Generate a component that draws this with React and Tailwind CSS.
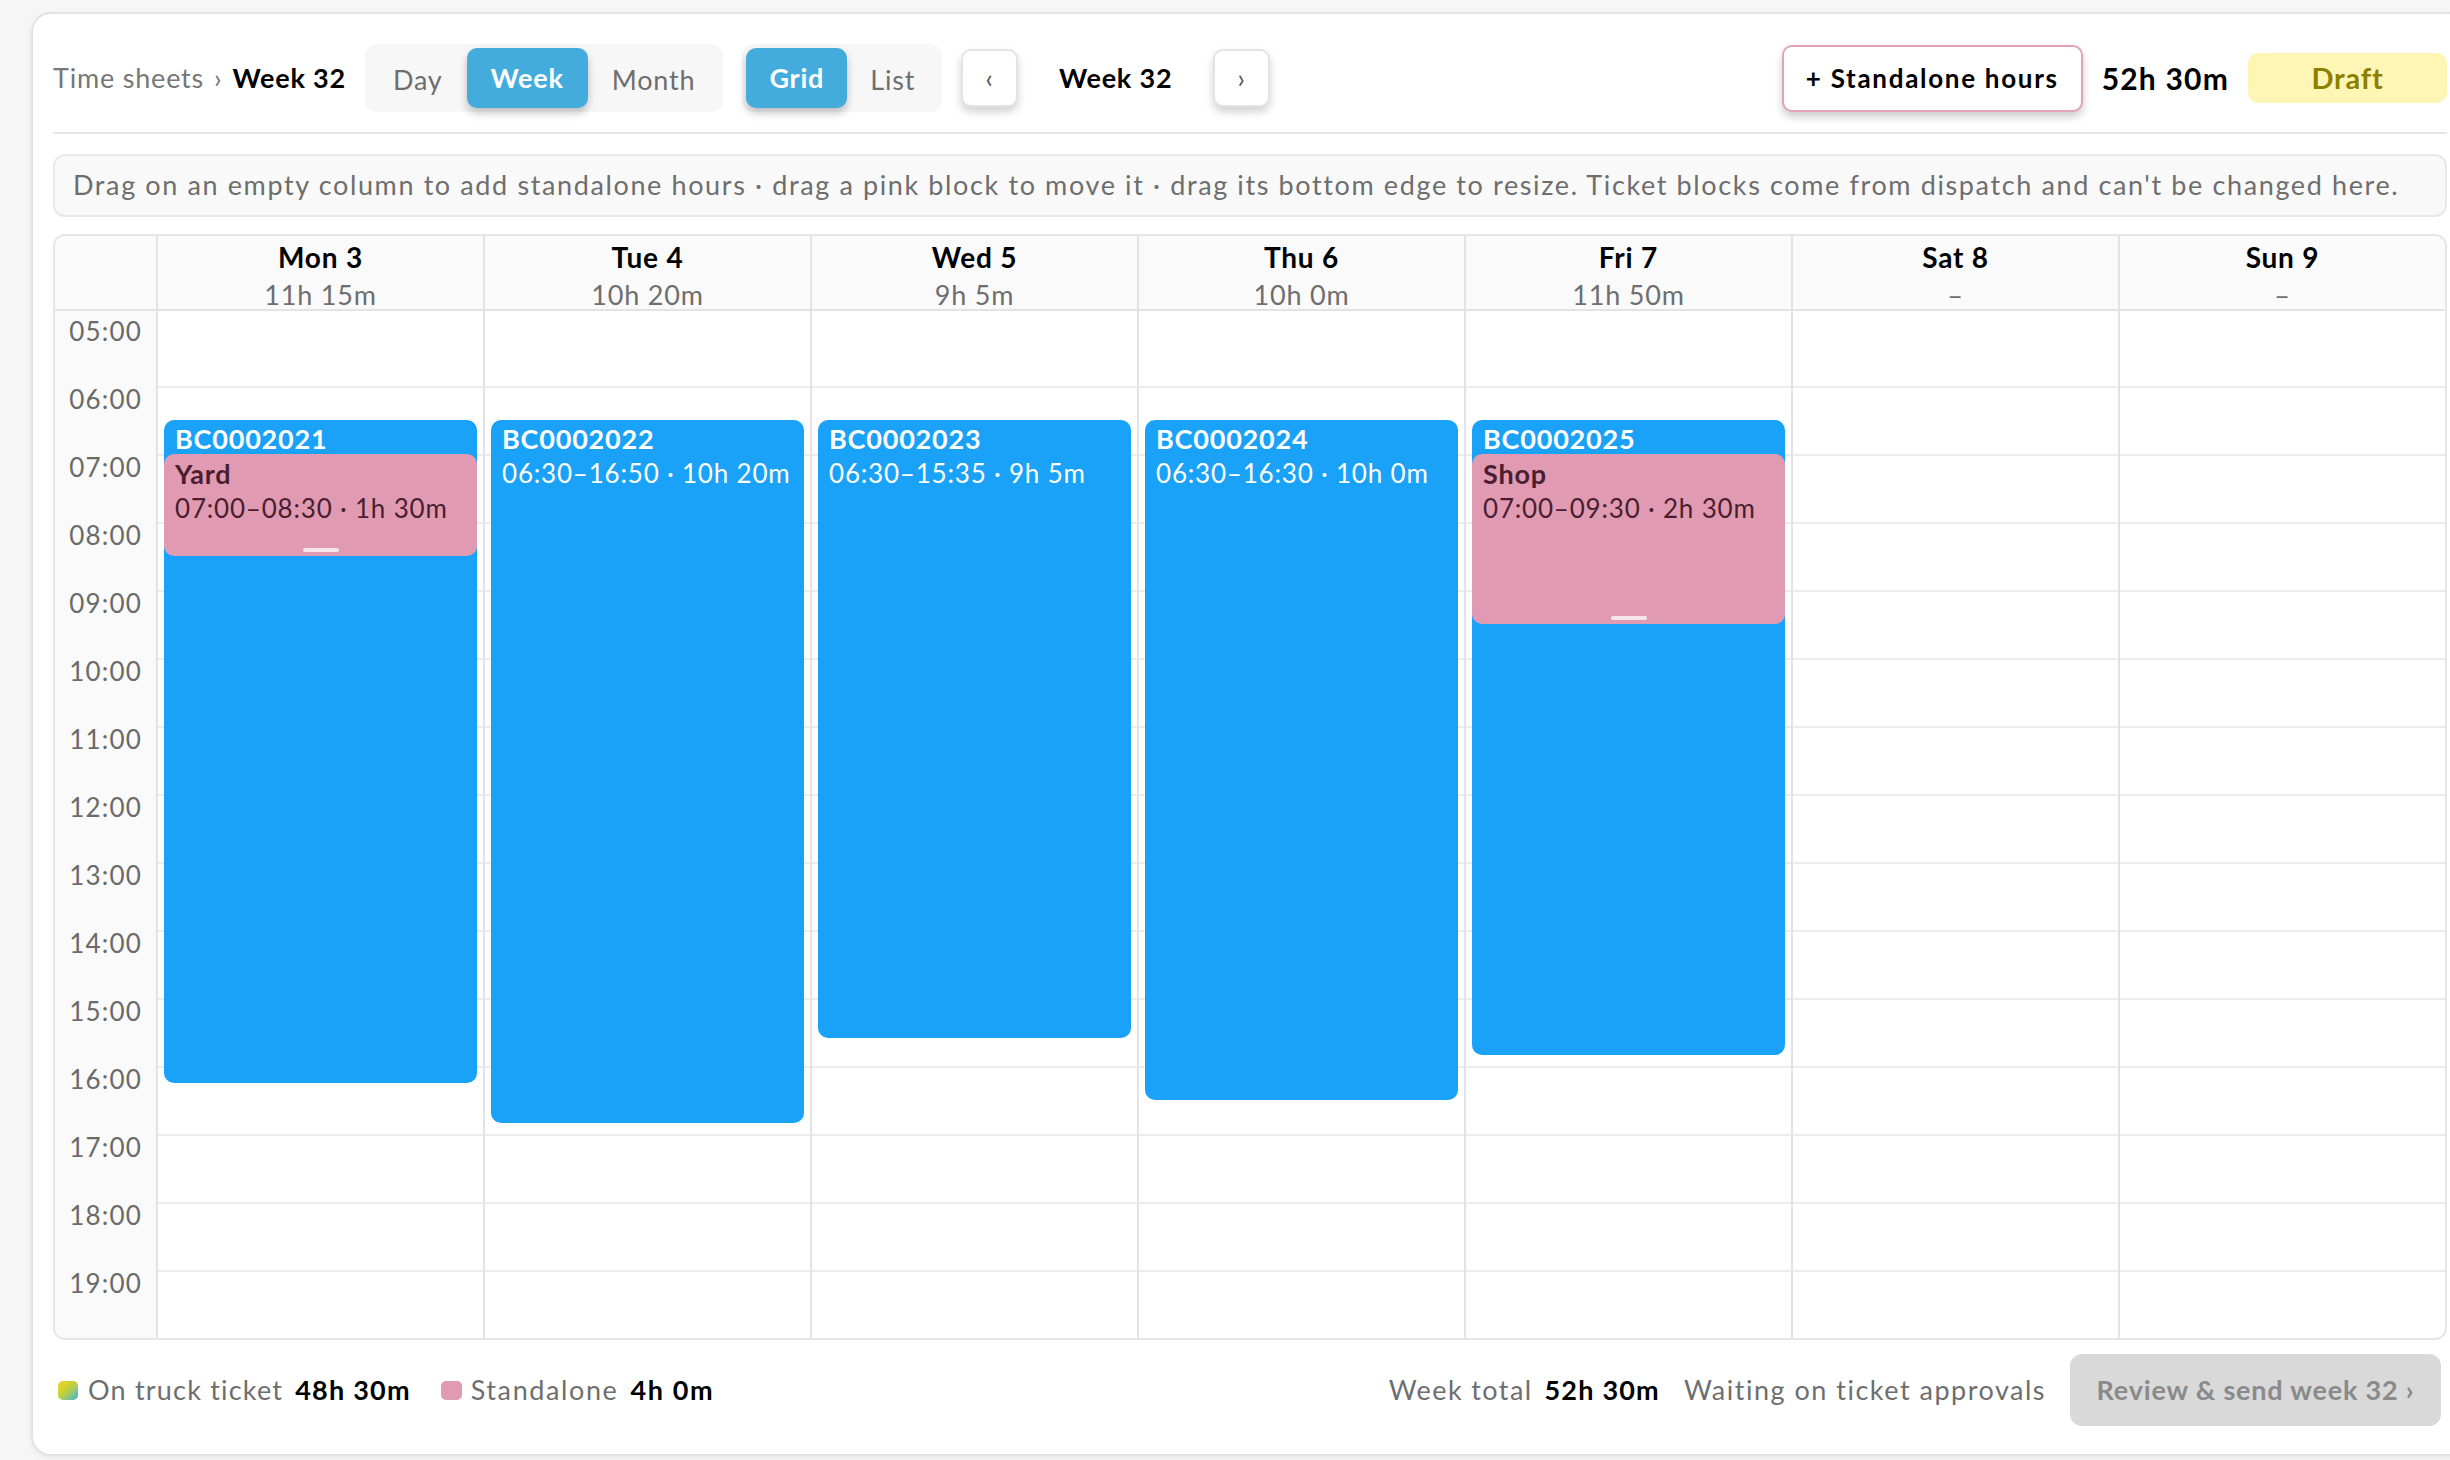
import React from "react";

const FONT = { fontFamily: "Lato, 'Noto Sans', sans-serif" };

const HOURS = ["05:00","06:00","07:00","08:00","09:00","10:00","11:00","12:00","13:00","14:00","15:00","16:00","17:00","18:00","19:00"];
const HOUR_H = 68;
const TOP_PAD = 7;

const DAYS = [
  { name: "Mon 3", total: "11h 15m", ticket: { id: "BC0002021", start: 6.5, end: 16.25 }, stand: { name: "Yard", start: 7, end: 8.5, label: "07:00–08:30 · 1h 30m" } },
  { name: "Tue 4", total: "10h 20m", ticket: { id: "BC0002022", start: 6.5, end: 16 + 50 / 60, label: "06:30–16:50 · 10h 20m" } },
  { name: "Wed 5", total: "9h 5m", ticket: { id: "BC0002023", start: 6.5, end: 15 + 35 / 60, label: "06:30–15:35 · 9h 5m" } },
  { name: "Thu 6", total: "10h 0m", ticket: { id: "BC0002024", start: 6.5, end: 16.5, label: "06:30–16:30 · 10h 0m" } },
  { name: "Fri 7", total: "11h 50m", ticket: { id: "BC0002025", start: 6.5, end: 15 + 50 / 60 }, stand: { name: "Shop", start: 7, end: 9.5, label: "07:00–09:30 · 2h 30m" } },
  { name: "Sat 8", total: "–" },
  { name: "Sun 9", total: "–" },
];

const pos = (s, e) => ({ top: TOP_PAD + (s - 5) * HOUR_H, height: (e - s) * HOUR_H });

function Segmented({ items, active, px }) {
  return (
    <div className="flex h-[68px] items-center rounded-[12px] bg-[#f7f7f7] p-[4px] tracking-[0.8px]">
      {items.map((it) => (
        <div
          key={it}
          className={
            (it === active
              ? "flex h-[60px] items-center rounded-[10px] bg-[#44acdd] text-[27px] font-bold text-white shadow-[0_5px_9px_rgba(0,0,0,0.24)] "
              : "flex h-[60px] items-center pt-[4px] text-[27px] text-[#6e6e6e] ") + px
          }
        >
          {it}
        </div>
      ))}
    </div>
  );
}

function NavBtn({ children }) {
  return (
    <div className="flex h-[58px] w-[57px] items-center justify-center rounded-[10px] border-2 border-[#e4e4e4] bg-white text-[26px] text-[#555] shadow-[0_5px_8px_rgba(0,0,0,0.18)]">
      {children}
    </div>
  );
}

export default function App() {
  return (
    <div className="h-[1460px] w-[2450px] overflow-hidden bg-[#f6f6f6] pl-[31px] pt-[12px] tracking-[1.2px]" style={FONT}>
      <div className="flex w-[2438px] flex-col rounded-[20px] border-2 border-[#e3e3e3] bg-white px-[20px] pb-[28px] pt-[30px] shadow-[0_2px_6px_rgba(0,0,0,0.06)]">
        {/* Top bar */}
        <div className="flex h-[68px] items-center">
          <div className="flex items-center gap-[19px]">
            <div className="flex items-baseline text-[27px] tracking-[0.8px]">
              <span className="text-[#777]">Time sheets</span>
              <span className="mx-[10px] text-[#777]">›</span>
              <span className="font-bold text-black">Week 32</span>
            </div>
            <Segmented items={["Day", "Week", "Month"]} active="Week" px="px-[24px]" />
            <Segmented items={["Grid", "List"]} active="Grid" px="px-[23px]" />
            <NavBtn>‹</NavBtn>
            <div className="w-[157px] text-center text-[27px] font-bold tracking-[0.8px] text-black">Week 32</div>
            <NavBtn>›</NavBtn>
          </div>
          <div className="ml-auto flex items-center gap-[19px]">
            <div className="flex h-[67px] items-center rounded-[10px] border-2 border-[#e2a2b8] bg-white px-[22px] text-[26px] font-bold tracking-[1.7px] text-black shadow-[0_5px_8px_rgba(0,0,0,0.2)]">
              + Standalone hours
            </div>
            <div className="text-[30px] font-bold text-black">52h 30m</div>
            <div className="flex h-[50px] w-[199px] items-center justify-center rounded-[10px] bg-[#fff6b6] text-[29px] font-bold tracking-[0.8px] text-[#8c8000]">
              Draft
            </div>
          </div>
        </div>
        <div className="mt-[20px] h-[2px] bg-[#e6e6e6]" />

        {/* Info */}
        <div className="mt-[20px] flex h-[63px] items-center whitespace-nowrap rounded-[12px] border-2 border-[#e8e8e8] bg-[#f9f9f9] px-[18px] text-[27px] tracking-[1.62px] text-[#6e6e6e]">
          Drag on an empty column to add standalone hours · drag a pink block to move it · drag its bottom edge to resize. Ticket blocks come from dispatch and can't be changed here.
        </div>

        {/* Grid */}
        <div className="mt-[17px] overflow-hidden rounded-[12px] border-2 border-[#e6e6e6]">
          <div className="grid grid-cols-[101px_repeat(7,minmax(0,1fr))] border-b-2 border-[#e3e3e3] bg-[#fafafa] tracking-[0.8px]">
            <div className="h-[73px]" />
            {DAYS.map((d) => (
              <div key={d.name} className="flex h-[73px] flex-col items-center border-l-2 border-[#e3e3e3]">
                <div className="mt-[4px] text-[28px] font-bold leading-[34px] text-black">{d.name}</div>
                <div className="mt-[7px] text-[27px] leading-[28px] text-[#6e6e6e]">{d.total}</div>
              </div>
            ))}
          </div>
          <div className="grid grid-cols-[101px_repeat(7,minmax(0,1fr))]">
            <div className="bg-[#fafafa] pt-[7px]">
              {HOURS.map((h) => (
                <div key={h} className="h-[68px] pr-[14px] text-right text-[26px] leading-[26px] text-[#6a6a6a]">
                  {h}
                </div>
              ))}
            </div>
            {DAYS.map((d) => (
              <div key={d.name} className="relative border-l-2 border-[#e3e3e3] pt-[7px] tracking-[0.8px]">
                {HOURS.map((h, i) => (
                  <div key={h} className={i === 0 ? "h-[68px]" : "h-[68px] border-t-2 border-[#ececec]"} />
                ))}
                {d.ticket && (
                  <div
                    className="absolute left-[6px] right-[6px] rounded-[10px] bg-[#19a2f8] px-[11px] pt-[2px] text-white"
                    style={pos(d.ticket.start, d.ticket.end)}
                  >
                    <div className="text-[27px] font-bold leading-[34px]">{d.ticket.id}</div>
                    {d.ticket.label && <div className="text-[26px] leading-[34px]">{d.ticket.label}</div>}
                  </div>
                )}
                {d.stand && (
                  <div
                    className="absolute left-[6px] right-[6px] rounded-[10px] bg-[#e09bb2] px-[11px] pt-[3px] text-[#4a1e30]"
                    style={pos(d.stand.start, d.stand.end)}
                  >
                    <div className="text-[27px] font-bold leading-[34px]">{d.stand.name}</div>
                    <div className="text-[26px] leading-[34px]">{d.stand.label}</div>
                    <div className="absolute bottom-[4px] left-1/2 h-[4px] w-[36px] -translate-x-1/2 rounded-full bg-[#f6e4eb]" />
                  </div>
                )}
              </div>
            ))}
          </div>
        </div>

        {/* Footer */}
        <div className="mt-[14px] flex h-[72px] items-center">
          <div className="flex items-center pl-[5px] text-[27px]">
            <span className="h-[19px] w-[20px] rounded-[5px] bg-linear-to-br from-[#f9d41c] via-[#b9cf3a] to-[#12b0cc]" />
            <span className="ml-[10px] text-[#6e6e6e]">On truck ticket</span>
            <span className="ml-[12px] font-bold text-black">48h 30m</span>
            <span className="ml-[30px] h-[19px] w-[21px] rounded-[5px] bg-[#e09bb2]" />
            <span className="ml-[9px] tracking-[1.6px] text-[#6e6e6e]">Standalone</span>
            <span className="ml-[12px] font-bold tracking-[1.6px] text-black">4h 0m</span>
          </div>
          <div className="ml-auto mr-[6px] flex items-center text-[27px]">
            <span className="tracking-[1.4px] text-[#6e6e6e]">Week total</span>
            <span className="ml-[12px] font-bold text-black">52h 30m</span>
            <span className="ml-[24px] tracking-[1.5px] text-[#6e6e6e]">Waiting on ticket approvals</span>
            <div className="ml-[24px] flex h-[72px] w-[371px] items-center justify-center rounded-[12px] bg-[#d9d9d9] text-[27px] font-bold tracking-[0.8px] text-[#8a8a8a]">
              Review &amp; send week 32 ›
            </div>
          </div>
        </div>
      </div>
    </div>
  );
}
